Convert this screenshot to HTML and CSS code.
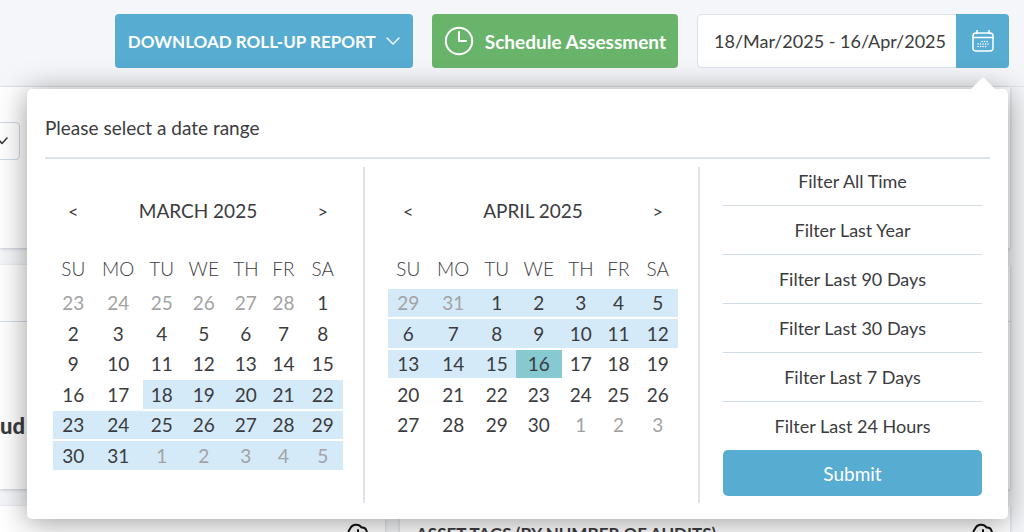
FILE: index.html
```html
<!DOCTYPE html>
<html lang="en">
<head>
    <meta charset="UTF-8">
    <title>Assessments</title>
    <link rel="stylesheet" href="styles.css">
</head>
<body>
    <header class="toolbar">
        <button type="button" class="btn btn-download">DOWNLOAD ROLL-UP REPORT
            <svg width="14" height="8" viewBox="0 0 14 8"><path d="M1 1l6 6 6-6"/></svg>
        </button>
        <button type="button" class="btn btn-schedule">
            <svg width="30" height="30" viewBox="0 0 30 30"><circle cx="15" cy="15" r="13.2"/><path d="M15 6v9h7"/></svg>
            Schedule Assessment
        </button>
        <div class="picker">
            <input class="picker-input" type="text" aria-label="Date range" value="18/Mar/2025 - 16/Apr/2025">
            <button type="button" class="picker-btn" aria-label="Open calendar">
                <svg width="22" height="22" viewBox="0 0 22 22">
                    <rect x="1" y="3" width="20" height="18" rx="3"/>
                    <path d="M1 7.5h20M5 0.5v3M17 0.5v3"/>
                    <path class="dots" d="M10 11.5h7M6 14h11M6 16.5h9"/>
                </svg>
            </button>

            <div class="popover">
                <p class="popover-title">Please select a date range</p>
                <div class="popover-body">
                    <div class="month">
                        <table class="calendar">
                            <colgroup><col class="c-su"><col class="c-mo"><col class="c-tu"><col class="c-we"><col class="c-th"><col class="c-fr"><col class="c-sa"></colgroup>
                            <thead>
                                <tr class="nav">
                                    <th><button type="button">&lt;</button></th>
                                    <th colspan="5">MARCH 2025</th>
                                    <th><button type="button">&gt;</button></th>
                                </tr>
                                <tr class="week"><th>SU</th><th>MO</th><th>TU</th><th>WE</th><th>TH</th><th>FR</th><th>SA</th></tr>
                            </thead>
                            <tbody>
                                <tr>
                                    <td class="off"><button type="button">23</button></td>
                                    <td class="off"><button type="button">24</button></td>
                                    <td class="off"><button type="button">25</button></td>
                                    <td class="off"><button type="button">26</button></td>
                                    <td class="off"><button type="button">27</button></td>
                                    <td class="off"><button type="button">28</button></td>
                                    <td><button type="button">1</button></td>
                                </tr>
                                <tr>
                                    <td><button type="button">2</button></td>
                                    <td><button type="button">3</button></td>
                                    <td><button type="button">4</button></td>
                                    <td><button type="button">5</button></td>
                                    <td><button type="button">6</button></td>
                                    <td><button type="button">7</button></td>
                                    <td><button type="button">8</button></td>
                                </tr>
                                <tr>
                                    <td><button type="button">9</button></td>
                                    <td><button type="button">10</button></td>
                                    <td><button type="button">11</button></td>
                                    <td><button type="button">12</button></td>
                                    <td><button type="button">13</button></td>
                                    <td><button type="button">14</button></td>
                                    <td><button type="button">15</button></td>
                                </tr>
                                <tr>
                                    <td><button type="button">16</button></td>
                                    <td><button type="button">17</button></td>
                                    <td class="in"><button type="button">18</button></td>
                                    <td class="in"><button type="button">19</button></td>
                                    <td class="in"><button type="button">20</button></td>
                                    <td class="in"><button type="button">21</button></td>
                                    <td class="in"><button type="button">22</button></td>
                                </tr>
                                <tr>
                                    <td class="in"><button type="button">23</button></td>
                                    <td class="in"><button type="button">24</button></td>
                                    <td class="in"><button type="button">25</button></td>
                                    <td class="in"><button type="button">26</button></td>
                                    <td class="in"><button type="button">27</button></td>
                                    <td class="in"><button type="button">28</button></td>
                                    <td class="in"><button type="button">29</button></td>
                                </tr>
                                <tr>
                                    <td class="in"><button type="button">30</button></td>
                                    <td class="in"><button type="button">31</button></td>
                                    <td class="in off"><button type="button">1</button></td>
                                    <td class="in off"><button type="button">2</button></td>
                                    <td class="in off"><button type="button">3</button></td>
                                    <td class="in off"><button type="button">4</button></td>
                                    <td class="in off"><button type="button">5</button></td>
                                </tr>
                            </tbody>
                        </table>
                    </div>
                    <div class="month month-end">
                        <table class="calendar">
                            <colgroup><col class="c-su"><col class="c-mo"><col class="c-tu"><col class="c-we"><col class="c-th"><col class="c-fr"><col class="c-sa"></colgroup>
                            <thead>
                                <tr class="nav">
                                    <th><button type="button">&lt;</button></th>
                                    <th colspan="5">APRIL 2025</th>
                                    <th><button type="button">&gt;</button></th>
                                </tr>
                                <tr class="week"><th>SU</th><th>MO</th><th>TU</th><th>WE</th><th>TH</th><th>FR</th><th>SA</th></tr>
                            </thead>
                            <tbody>
                                <tr>
                                    <td class="in off"><button type="button">29</button></td>
                                    <td class="in off"><button type="button">31</button></td>
                                    <td class="in"><button type="button">1</button></td>
                                    <td class="in"><button type="button">2</button></td>
                                    <td class="in"><button type="button">3</button></td>
                                    <td class="in"><button type="button">4</button></td>
                                    <td class="in"><button type="button">5</button></td>
                                </tr>
                                <tr>
                                    <td class="in"><button type="button">6</button></td>
                                    <td class="in"><button type="button">7</button></td>
                                    <td class="in"><button type="button">8</button></td>
                                    <td class="in"><button type="button">9</button></td>
                                    <td class="in"><button type="button">10</button></td>
                                    <td class="in"><button type="button">11</button></td>
                                    <td class="in"><button type="button">12</button></td>
                                </tr>
                                <tr>
                                    <td class="in"><button type="button">13</button></td>
                                    <td class="in"><button type="button">14</button></td>
                                    <td class="in"><button type="button">15</button></td>
                                    <td class="today"><button type="button">16</button></td>
                                    <td><button type="button">17</button></td>
                                    <td><button type="button">18</button></td>
                                    <td><button type="button">19</button></td>
                                </tr>
                                <tr>
                                    <td><button type="button">20</button></td>
                                    <td><button type="button">21</button></td>
                                    <td><button type="button">22</button></td>
                                    <td><button type="button">23</button></td>
                                    <td><button type="button">24</button></td>
                                    <td><button type="button">25</button></td>
                                    <td><button type="button">26</button></td>
                                </tr>
                                <tr>
                                    <td><button type="button">27</button></td>
                                    <td><button type="button">28</button></td>
                                    <td><button type="button">29</button></td>
                                    <td><button type="button">30</button></td>
                                    <td class="off"><button type="button">1</button></td>
                                    <td class="off"><button type="button">2</button></td>
                                    <td class="off"><button type="button">3</button></td>
                                </tr>
                            </tbody>
                        </table>
                    </div>
                    <div class="filters">
                        <button type="button" class="filter">Filter All Time</button>
                        <button type="button" class="filter">Filter Last Year</button>
                        <button type="button" class="filter">Filter Last 90 Days</button>
                        <button type="button" class="filter">Filter Last 30 Days</button>
                        <button type="button" class="filter">Filter Last 7 Days</button>
                        <button type="button" class="filter">Filter Last 24 Hours</button>
                        <button type="submit" class="submit">Submit</button>
                    </div>
                </div>
            </div>
        </div>
    </header>

    <main class="content">
        <section class="card card-select">
            <button type="button" class="dropdown" aria-label="Select">
                <svg width="12" height="8" viewBox="0 0 12 8"><path d="M1 1l5 5.5L11 1"/></svg>
            </button>
        </section>
        <section class="card">
            <div class="card-head"></div>
            <div class="card-count">ud</div>
        </section>
        <div class="row">
            <section class="card card-chart">
                <svg class="cloud" width="22" height="20" viewBox="0 0 22 20"><path d="M6 15.500a5 5 0 0 1-3-8.500A6.500 6.500 0 0 1 14.500 5.500a5 5 0 0 1 2.500 9.500M11 8v10M8 15l3 3 3-3"/></svg>
            </section>
            <section class="card card-chart">
                <h2>ASSET TAGS (BY NUMBER OF AUDITS)</h2>
                <svg class="cloud" width="22" height="20" viewBox="0 0 22 20"><path d="M6 15.500a5 5 0 0 1-3-8.500A6.500 6.500 0 0 1 14.500 5.500a5 5 0 0 1 2.500 9.500M11 8v10M8 15l3 3 3-3"/></svg>
            </section>
        </div>
    </main>
</body>
</html>
```
FILE: styles.css
```css
*{
    box-sizing: border-box;
    padding: 0;
    margin: 0;
}
body{
    height: 100vh;
    overflow: hidden;
    background: #f5f6f9;
    color: #3b3b40;
    font-family: Lato, "Liberation Sans", sans-serif;
    font-size: 18px;
}
button, input{
    font: inherit;
    color: inherit;
    border: 0;
    background: none;
}
button{
    cursor: pointer;
}
svg{
    fill: none;
    stroke: currentColor;
    stroke-linecap: round;
    stroke-linejoin: round;
    flex: none;
}

/* toolbar */
.toolbar{
    display: flex;
    justify-content: flex-end;
    gap: 19px;
    padding: 14px 15px 18px;
    border-bottom: 1px solid #e3e8ef;
}
.btn{
    display: flex;
    align-items: center;
    height: 54px;
    border-radius: 4px;
    color: #fff;
    font-weight: bold;
    white-space: nowrap;
}
.btn-download{
    gap: 10px;
    padding: 0 13px;
    background: #57acd1;
    font-size: 17px;
}
.btn-download svg{
    stroke-width: 1.4;
}
.btn-schedule{
    gap: 11px;
    padding: 0 12px;
    background: #69b46b;
    font-size: 19px;
}
.btn-schedule svg{
    stroke-width: 2;
}
.picker{
    position: relative;
    display: flex;
    width: 312px;
    height: 54px;
}
.picker-input{
    flex: 1;
    min-width: 0;
    padding-left: 16px;
    border: 1px solid #dbe2eb;
    border-right: 0;
    border-radius: 5px 0 0 5px;
    background: #fff;
    font-size: 18px;
}
.picker-btn{
    display: flex;
    align-items: center;
    justify-content: center;
    width: 53px;
    border-radius: 0 4px 4px 0;
    background: #57acd1;
    color: #fff;
}
.picker-btn svg{
    stroke-width: 1.5;
}
.picker-btn .dots{
    stroke-dasharray: 0.1 2.4;
}

/* popover with the two months */
.popover{
    position: absolute;
    z-index: 10;
    top: 75px;
    right: 1px;
    width: calc(100vw - 43px);
    padding: 25px 18px 16px;
    border-radius: 5px;
    background: #fff;
    box-shadow: 0 3px 30px rgba(0, 0, 0, 0.4);
}
.popover:before{
    content: "";
    position: absolute;
    top: -12px;
    right: 13px;
    border: 12px solid transparent;
    border-top: 0;
    border-bottom-color: #fff;
}
.popover-title{
    padding-bottom: 15px;
    border-bottom: 2px solid #dde3ec;
    font-size: 19px;
    line-height: 28px;
}
.popover-body{
    display: grid;
    grid-template-columns: 320fr 335fr 290fr;
    padding-top: 8px;
}
.month{
    padding: 0 20px 31px 8px;
    border-right: 2px solid #dde3ec;
}
.month-end{
    padding-left: 23px;
}
.calendar{
    width: 100%;
    table-layout: fixed;
    border-spacing: 0 2px;
    text-align: center;
    font-size: 19px;
}
.c-su{ width: 14%; }
.c-mo{ width: 17%; }
.c-tu{ width: 13%; }
.c-we{ width: 16%; }
.c-th{ width: 13%; }
.c-fr{ width: 13%; }
.c-sa{ width: 14%; }
.calendar th{
    font-weight: normal;
}
.calendar .nav th{
    height: 84px;
    padding-bottom: 2px;
}
.nav button{
    width: 100%;
    font-size: 18px;
}
.calendar .week th{
    height: 32px;
    padding-bottom: 6px;
    font-weight: 300;
}
.calendar td button{
    display: block;
    width: 100%;
    height: 28px;
    line-height: 28px;
}
.calendar tr:nth-child(even) td button{
    height: 29px;
}
.off{
    color: #a3a3a3;
}
.in{
    background: #d4eaf8;
}
.today{
    background: #87c9d1;
}

/* quick filters */
.filters{
    display: flex;
    flex-direction: column;
    padding: 2px 8px 0 23px;
}
.filter{
    padding: 12px 0;
    border-bottom: 1px solid #d3dbe6;
    font-size: 18px;
    line-height: 24px;
}
.filter:first-child{
    padding-top: 0;
}
.filter:nth-child(6){
    border-bottom: 0;
}
.submit{
    height: 46px;
    border-radius: 5px;
    background: #57acd1;
    color: #fff;
    font-size: 19px;
}

/* page below */
.content{
    display: flex;
    flex-direction: column;
    gap: 17px;
    padding-right: 14px;
}
.card{
    background: #fff;
    box-shadow: 0 1px 3px rgba(80, 95, 130, 0.3);
}
.card-select{
    padding: 35px 0 88px;
}
.dropdown{
    display: flex;
    align-items: center;
    justify-content: flex-end;
    width: 60px;
    height: 38px;
    margin-left: -40px;
    padding-right: 11px;
    border: 1px solid #d0d8e4;
    border-radius: 4px;
}
.dropdown svg{
    stroke-width: 1.6;
}
.card-head{
    height: 57px;
    border-bottom: 1px solid #d3dbe6;
}
.card-count{
    padding: 92px 0 51px;
    font-size: 22px;
    font-weight: 900;
    line-height: 24px;
}
.row{
    display: flex;
    gap: 15px;
}
.card-chart{
    display: flex;
    align-items: flex-start;
    flex: 1;
    height: 200px;
    padding: 16px;
}
.card-chart:first-child{
    flex: 0 0 385px;
}
.card-chart h2{
    font-size: 17px;
    line-height: 24px;
    font-weight: bold;
}
.cloud{
    margin-left: auto;
    stroke: #111;
    stroke-width: 2;
}
```
